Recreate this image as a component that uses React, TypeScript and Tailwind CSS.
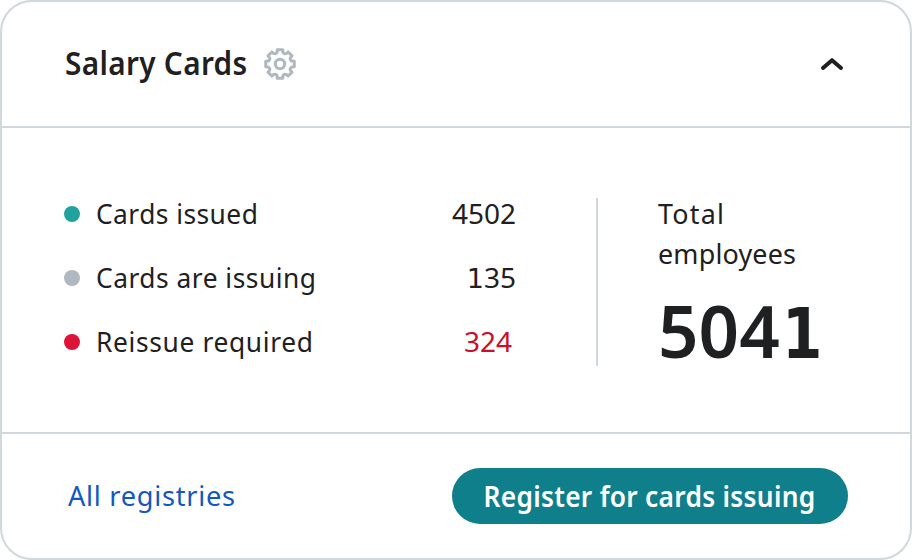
const rows = [
  { label: 'Cards issued', value: '4502', dot: 'bg-[#20a39e]', tracking: 'tracking-[0.5px]', valueStyle: '-translate-y-px' },
  { label: 'Cards are issuing', value: '135', dot: 'bg-[#b0b8c1]', tracking: 'tracking-[0.55px]', valueStyle: "first-letter:font-['DejaVu_Sans',sans-serif] first-letter:text-[27px]" },
  { label: 'Reissue required', value: '324', dot: 'bg-[#dd1438]', tracking: 'tracking-[0.7px]', valueStyle: '-translate-y-px mr-1 text-[#c8102e]' },
];

const point = (radius: number, degrees: number) => {
  const a = (degrees * Math.PI) / 180;
  return `${(16 + radius * Math.sin(a)).toFixed(2)} ${(16 - radius * Math.cos(a)).toFixed(2)}`;
};

const gearPath =
  `M${point(14.5, -11)}` +
  [0, 45, 90, 135, 180, 225, 270, 315]
    .map((d) => `L${point(14.5, d + 11)}C${point(10.4, d + 13)} ${point(10.4, d + 32)} ${point(14.5, d + 34)}`)
    .join('') +
  'Z';

function Gear() {
  return (
    <svg className="ml-4 size-8 text-[#b0b8c1]" viewBox="0 0 32 32" fill="none" stroke="currentColor" strokeWidth="3.1" strokeLinejoin="round">
      <path d={gearPath} />
      <circle cx="16" cy="16" r="4.7" />
    </svg>
  );
}

export default function App() {
  return (
    <div className="flex h-[560px] w-[912px] flex-col overflow-hidden rounded-[32px] border-2 border-[#d0d7dd] bg-white font-['Noto_Sans',sans-serif] text-[28px] leading-10 text-[#1f2022]">
      <header className="flex h-[126px] items-center border-b-2 border-[#d0d7dd] px-[62px]">
        <h1 className="w-[184px] pb-0.5 text-[32px] font-semibold whitespace-nowrap">
          <span className="ml-px inline-block origin-left scale-x-[0.93] tracking-[0.35px]">Salary Cards</span>
        </h1>
        <Gear />
        <button className="ml-auto" aria-label="Collapse">
          <svg className="size-8" viewBox="0 0 32 32" fill="none" stroke="currentColor" strokeWidth="4" strokeLinecap="round" strokeLinejoin="round">
            <path d="M7 20 16 12.2 25 20" />
          </svg>
        </button>
      </header>
      <main className="flex h-[306px] border-b-2 border-[#d0d7dd] px-[62px] pt-[66px]">
        <div className="flex w-[452px] flex-col gap-6">
          {rows.map((row) => (
            <div key={row.label} className="flex h-10 items-center whitespace-nowrap">
              <span className={'mr-4 size-4 rounded-full ' + row.dot} />
              <span className={'origin-left -translate-y-px scale-x-[0.94] ' + row.tracking}>{row.label}</span>
              <span className={'ml-auto block ' + row.valueStyle}>{row.value}</span>
            </div>
          ))}
        </div>
        <section className="mt-1 ml-20 h-[168px] border-l-2 border-[#d0d7dd] pl-[60px]">
          <p className="-mt-[5px] origin-left scale-x-[0.96]">
            <span className="tracking-[1.3px]">Total</span><br />
            <span className="tracking-[0.2px]">employees</span>
          </p>
          <p className="mt-[17px] flex items-baseline text-[72px] leading-[80px] font-semibold">
            <span className="w-[124px] origin-left scale-x-[0.985]">504</span>
            <span className="origin-left scale-x-[0.83] font-['DejaVu_Sans',sans-serif] text-[70px] font-bold">1</span>
          </p>
        </section>
      </main>
      <footer className="flex grow items-center justify-between px-[62px]">
        <a className="ml-1 origin-left -translate-y-px scale-x-[0.97] tracking-[0.75px] text-[#1258bf]">All registries</a>
        <button className="flex h-14 w-[396px] items-center justify-center rounded-full bg-[#107f8c] font-semibold whitespace-nowrap text-white">
          <span className="scale-x-[0.94] tracking-[0.3px]">Register for cards issuing</span>
        </button>
      </footer>
    </div>
  );
}
